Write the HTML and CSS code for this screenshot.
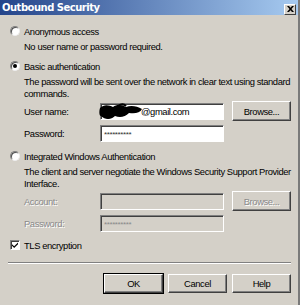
FILE: index.html
```html
<!DOCTYPE html>
<html lang="en">
<head>
    <meta charset="UTF-8">
    <title>Outbound Security</title>
    <link rel="stylesheet" href="styles.css">
</head>
<body>
<div class="window">
    <div class="titlebar">
        <span class="title">Outbound Security</span>
        <div class="closebtn">
            <svg width="7" height="6" viewBox="0 0 7 6"><path d="M0 0h2l1.5 1.7L5 0h2L4.5 3 7 6H5L3.5 4.3 2 6H0l2.5-3z" fill="#000"/></svg>
        </div>
    </div>
    <div class="content">
        <div class="option">
            <span class="radio"></span>
            <span>Anonymous access</span>
        </div>
        <p class="desc one">No user name or password required.</p>

        <div class="option second">
            <span class="radio checked"></span>
            <span>Basic authentication</span>
        </div>
        <p class="desc">The password will be sent over the network in clear text using standard commands.</p>
        <div class="field first">
            <label>User name:</label>
            <div class="input">
                <svg class="scribble" width="46" height="16" viewBox="0 0 46 16"><path d="M2 5c4-4 9-3 13-1 4-3 9-2 13 0 5-2 11-1 16 2-2 4-7 5-13 4-4 4-9 5-14 3-4 4-10 4-14 0-2 0-2-5-1-8z" fill="#000"/><path d="M5 12c3 3 7 3 10 1M20 3c3-2 6-2 8 0" stroke="#000" stroke-width="2" fill="none"/></svg>
                <span>@gmail.com</span>
            </div>
            <div class="btn">Browse...</div>
        </div>
        <div class="field">
            <label>Password:</label>
            <div class="input stars">**********</div>
        </div>

        <div class="option third">
            <span class="radio"></span>
            <span>Integrated Windows Authentication</span>
        </div>
        <p class="desc">The client and server negotiate the Windows Security Support Provider Interface.</p>
        <div class="field first disabled">
            <label>Account:</label>
            <div class="input"></div>
            <div class="btn">Browse...</div>
        </div>
        <div class="field disabled">
            <label>Password:</label>
            <div class="input stars">**********</div>
        </div>

        <div class="option tls">
            <span class="checkbox">
                <svg width="7" height="7" viewBox="0 0 7 7"><path d="M0 2.5l2.5 2.5L7 0.5v2L2.5 7 0 4.5z" fill="#000"/></svg>
            </span>
            <span>TLS encryption</span>
        </div>
    </div>
    <div class="separator"></div>
    <div class="buttons">
        <div class="btn default">OK</div>
        <div class="btn">Cancel</div>
        <div class="btn">Help</div>
    </div>
</div>
</body>
</html>
```
FILE: styles.css
```css
*{
    margin: 0px;
    padding: 0px;
    box-sizing: border-box;
}
body{
    font-family: "Liberation Sans", Arial, sans-serif;
    font-size: 9.4px;
    letter-spacing: -0.4px;
    color: #000;
    background-color: #d4d0c8;
}
.window{
    width: 300px;
    height: 305px;
    background-color: #d4d0c8;
    border-right: 2px solid #7a7a7a;
    display: flex;
    flex-direction: column;
}
.titlebar{
    height: 15px;
    display: flex;
    align-items: center;
    justify-content: space-between;
    padding: 0px 2px 0px 2px;
    background: linear-gradient(90deg, #24448a, #a6caf0);
}
.title{
    color: #fff;
    font-weight: bold;
    font-family: "DejaVu Sans", sans-serif;
    font-size: 10px;
    letter-spacing: -0.5px;
}
.closebtn{
    width: 12px;
    height: 11px;
    margin-top: 3px;
    background-color: #d4d0c8;
    border: 1px solid;
    border-color: #fff #404040 #404040 #fff;
    display: flex;
    align-items: center;
    justify-content: center;
}
.content{
    padding: 9px 0px 0px 10px;
    display: flex;
    flex-direction: column;
}
.option{
    display: flex;
    align-items: center;
    gap: 4px;
    height: 14px;
}
.option.second{
    margin-top: 6px;
}
.option.third{
    margin-top: 6px;
}
.radio{
    width: 10px;
    height: 10px;
    border-radius: 50%;
    background-color: #fff;
    border: 1px solid;
    border-color: #808080 #eee #eee #808080;
    box-shadow: inset 1px 1px 0px #505050;
    display: flex;
    align-items: center;
    justify-content: center;
}
.radio.checked::after{
    content: "";
    width: 4px;
    height: 4px;
    border-radius: 50%;
    background-color: #000;
}
.desc{
    margin: 3px 0px 0px 14px;
    width: 270px;
    line-height: 12px;
}
.field{
    display: flex;
    align-items: center;
    height: 20px;
    margin-left: 14px;
    margin-top: 2px;
}
.field.first{
    margin-top: 1px;
}
.field label{
    width: 76px;
}
.input{
    width: 124px;
    height: 17px;
    background-color: #fff;
    border: 1px solid;
    border-color: #808080 #fff #fff #808080;
    box-shadow: inset 1px 1px 0px #404040;
    padding-left: 3px;
    display: flex;
    align-items: center;
}
.input.stars{
    font-size: 8px;
    letter-spacing: -0.4px;
    padding-top: 3px;
    color: #333;
}
.input span{
    margin-left: -3px;
}
.scribble{
    margin-left: -6px;
}
.btn{
    width: 59px;
    height: 20px;
    margin-left: 8px;
    display: flex;
    align-items: center;
    justify-content: center;
    background-color: #d4d0c8;
    border: 1px solid;
    border-color: #fff #404040 #404040 #fff;
    box-shadow: inset -1px -1px 0px #808080;
}
.disabled{
    color: #8a8a8a;
}
.disabled label{
    text-shadow: 1px 1px 0px #fff;
}
.disabled .input{
    background-color: #d4d0c8;
}
.disabled .input.stars{
    color: #8a8a8a;
}
.disabled .btn{
    text-shadow: 1px 1px 0px #fff;
}
.tls{
    margin-top: 5px;
    gap: 4px;
}
.checkbox{
    width: 10px;
    height: 10px;
    background-color: #fff;
    border: 1px solid;
    border-color: #808080 #fff #fff #808080;
    box-shadow: inset 1px 1px 0px #404040;
    display: flex;
    align-items: center;
    justify-content: center;
}
.checkbox svg{
    width: 6px;
    height: 6px;
}
.separator{
    margin: 10px 7px 0px 8px;
    border-top: 1px solid #808080;
    border-bottom: 1px solid #fff;
}
.buttons{
    display: flex;
    justify-content: flex-end;
    padding: 10px 7px 0px 0px;
}
.buttons .btn{
    height: 19px;
    margin-left: 5px;
}
.buttons .default{
    outline: 1px solid #000;
}
```
